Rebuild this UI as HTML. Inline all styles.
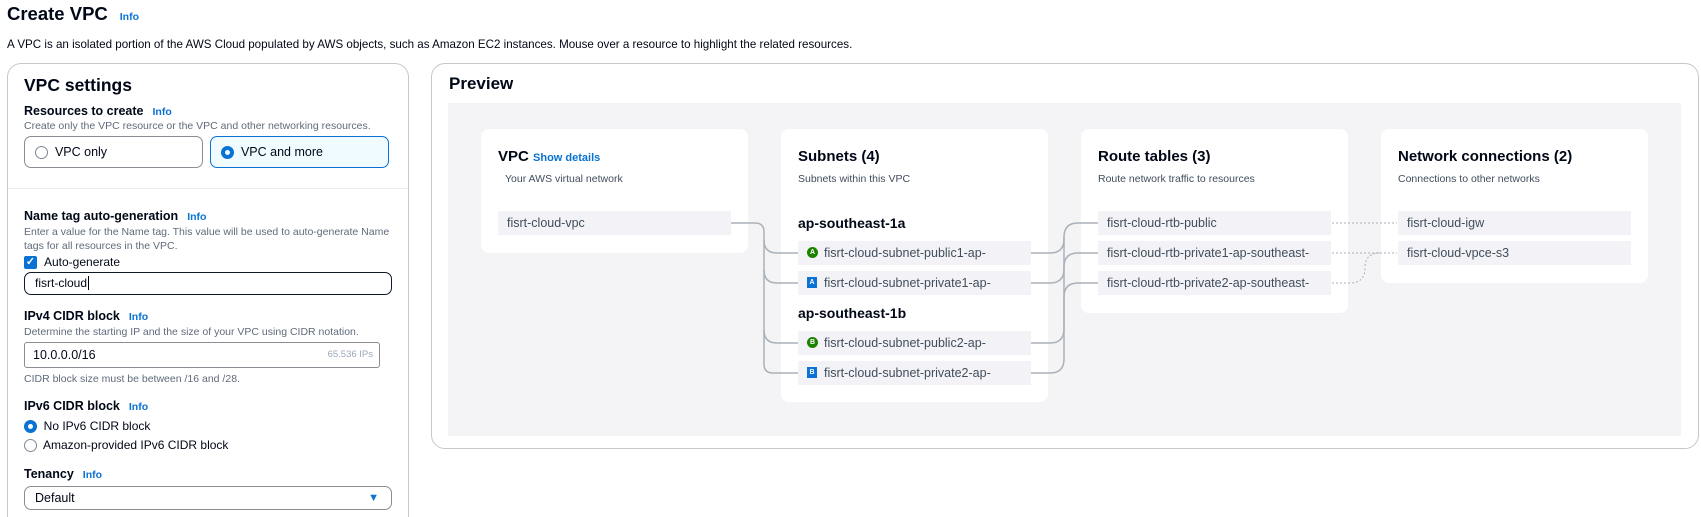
<!DOCTYPE html>
<html><head><meta charset="utf-8"><style>
*{box-sizing:border-box;margin:0;padding:0}
html,body{width:1701px;height:517px;overflow:hidden}
body{background:#fff;font-family:"Liberation Sans",sans-serif;color:#000716;position:relative}
.a{position:absolute;white-space:nowrap}
.info{color:#0972d3;font-weight:bold;font-size:10.5px;margin-left:9px}
.lbl{font-weight:bold;font-size:12.5px}
.sub{font-size:10.5px;color:#5f6b7a}
.card{position:absolute;background:#fff;border-radius:8px}
.row{position:absolute;background:#f3f3f7;height:24px;font-size:12.5px;color:#414d5c;line-height:24px;padding-left:9px;white-space:nowrap}
.ct{position:absolute;font-weight:bold;font-size:15px;left:17px;top:19px;white-space:nowrap}
.cs{position:absolute;font-size:10.5px;color:#414d5c;left:17px;top:44px;white-space:nowrap}
.box{position:absolute;border:1px solid #8c8c94;border-radius:7px}
.rad{display:inline-block;width:13px;height:13px;border-radius:50%;border:1.5px solid #7d8998;vertical-align:middle}
.radon{border:4px solid #0972d3}
</style></head><body>
<div class="a" style="left:7px;top:3px;font-size:18.5px;font-weight:bold">Create VPC<span class="info" style="margin-left:12px">Info</span></div>
<div class="a" style="left:7px;top:38px;font-size:11.6px">A VPC is an isolated portion of the AWS Cloud populated by AWS objects, such as Amazon EC2 instances. Mouse over a resource to highlight the related resources.</div>

<div style="position:absolute;left:7px;top:63px;width:402px;height:454px;border:1px solid #c6c6cd;border-bottom:none;border-radius:14px 14px 0 0"></div>
<div class="a" style="left:24px;top:75px;font-size:17.5px;font-weight:bold">VPC settings</div>
<div class="a lbl" style="left:24px;top:104px">Resources to create<span class="info">Info</span></div>
<div class="a sub" style="left:24px;top:120px">Create only the VPC resource or the VPC and other networking resources.</div>
<div class="box" style="left:24px;top:136px;width:179px;height:32px;line-height:30px;padding-left:10px;font-size:12.5px"><span class="rad"></span>&nbsp; VPC only</div>
<div class="box" style="left:210px;top:136px;width:179px;height:32px;line-height:30px;padding-left:10px;font-size:12.5px;background:#f0fbff;border-color:#0972d3"><span class="rad radon"></span>&nbsp; VPC and more</div>
<div style="position:absolute;left:8px;top:188px;width:400px;height:1px;background:#e9ebed"></div>
<div class="a lbl" style="left:24px;top:209px">Name tag auto-generation<span class="info">Info</span></div>
<div class="a sub" style="left:24px;top:225px;line-height:14px">Enter a value for the Name tag. This value will be used to auto-generate Name<br>tags for all resources in the VPC.</div>
<div class="a" style="left:24px;top:256px;width:13px;height:13px;background:#0972d3;border-radius:2px;color:#fff;font-size:11px;line-height:13px;text-align:center;font-weight:bold">✓</div>
<div class="a" style="left:44px;top:255px;font-size:12px">Auto-generate</div>
<div class="box" style="left:24px;top:272px;width:368px;height:23px;border:1.5px solid #0f1b2a;font-size:12px;line-height:20px;padding-left:10px">fisrt-cloud<span style="border-left:1px solid #000;margin-left:1px"></span></div>
<div class="a lbl" style="left:24px;top:309px">IPv4 CIDR block<span class="info">Info</span></div>
<div class="a sub" style="left:24px;top:326px">Determine the starting IP and the size of your VPC using CIDR notation.</div>
<div class="box" style="left:24px;top:342px;width:356px;height:26px;font-size:12.5px;line-height:24px;padding-left:8px;border-radius:3px">10.0.0.0/16<span style="position:absolute;right:6px;font-size:9.5px;color:#9ba7b6">65.536 IPs</span></div>
<div class="a sub" style="left:24px;top:373px">CIDR block size must be between /16 and /28.</div>
<div class="a lbl" style="left:24px;top:399px">IPv6 CIDR block<span class="info">Info</span></div>
<div class="a" style="left:24px;top:419px;font-size:12px"><span class="rad radon"></span>&nbsp; No IPv6 CIDR block</div>
<div class="a" style="left:24px;top:438px;font-size:12px"><span class="rad"></span>&nbsp; Amazon-provided IPv6 CIDR block</div>
<div class="a lbl" style="left:24px;top:467px">Tenancy<span class="info">Info</span></div>
<div class="box" style="left:24px;top:486px;width:368px;height:24px;font-size:12.5px;line-height:22px;padding-left:10px">Default<span style="position:absolute;right:12px;top:0;color:#0972d3;font-size:11px">▼</span></div>

<div style="position:absolute;left:431px;top:63px;width:1268px;height:386px;border:1px solid #c6c6cd;border-radius:14px"></div>
<div class="a" style="left:449px;top:74px;font-size:17px;font-weight:bold">Preview</div>
<div style="position:absolute;left:448px;top:103px;width:1233px;height:333px;background:#f4f4f6"></div>

<div class="card" style="left:481px;top:129px;width:267px;height:124px">
<div class="ct">VPC <span style="color:#0972d3;font-size:11px">Show details</span></div>
<div class="cs" style="left:24px">Your AWS virtual network</div>
<div class="row" style="left:17px;top:82px;width:233px">fisrt-cloud-vpc</div></div>

<div class="card" style="left:781px;top:129px;width:267px;height:273px">
<div class="ct">Subnets (4)</div><div class="cs">Subnets within this VPC</div>
<div class="a" style="left:17px;top:86px;font-weight:bold;font-size:14px">ap-southeast-1a</div>
<div class="row" style="left:17px;top:112px;width:233px;padding-left:26px"><span style="position:absolute;left:9px;top:6px;width:11px;height:11px;border-radius:50%;background:#1d8102;color:#fff;font-size:7px;line-height:11px;text-align:center;font-weight:bold">A</span>fisrt-cloud-subnet-public1-ap-</div>
<div class="row" style="left:17px;top:142px;width:233px;padding-left:26px"><span style="position:absolute;left:9px;top:6px;width:10px;height:11px;background:#0972d3;color:#fff;font-size:7px;line-height:11px;text-align:center;font-weight:bold">A</span>fisrt-cloud-subnet-private1-ap-</div>
<div class="a" style="left:17px;top:176px;font-weight:bold;font-size:14px">ap-southeast-1b</div>
<div class="row" style="left:17px;top:202px;width:233px;padding-left:26px"><span style="position:absolute;left:9px;top:6px;width:11px;height:11px;border-radius:50%;background:#1d8102;color:#fff;font-size:7px;line-height:11px;text-align:center;font-weight:bold">B</span>fisrt-cloud-subnet-public2-ap-</div>
<div class="row" style="left:17px;top:232px;width:233px;padding-left:26px"><span style="position:absolute;left:9px;top:6px;width:10px;height:11px;background:#0972d3;color:#fff;font-size:7px;line-height:11px;text-align:center;font-weight:bold">B</span>fisrt-cloud-subnet-private2-ap-</div></div>

<div class="card" style="left:1081px;top:129px;width:267px;height:184px">
<div class="ct">Route tables (3)</div><div class="cs">Route network traffic to resources</div>
<div class="row" style="left:17px;top:82px;width:233px">fisrt-cloud-rtb-public</div>
<div class="row" style="left:17px;top:112px;width:233px">fisrt-cloud-rtb-private1-ap-southeast-</div>
<div class="row" style="left:17px;top:142px;width:233px">fisrt-cloud-rtb-private2-ap-southeast-</div></div>

<div class="card" style="left:1381px;top:129px;width:267px;height:154px">
<div class="ct">Network connections (2)</div><div class="cs">Connections to other networks</div>
<div class="row" style="left:17px;top:82px;width:233px">fisrt-cloud-igw</div>
<div class="row" style="left:17px;top:112px;width:233px">fisrt-cloud-vpce-s3</div></div>

<svg style="position:absolute;left:0;top:0" width="1701" height="517" fill="none">
<g stroke="#aab1b8" stroke-width="1.5">
<path d="M731 223H755Q764 223 764 232V364Q764 373 773 373H798"/>
<path d="M764 240Q764 253 777 253H798M764 270Q764 283 777 283H798M764 330Q764 343 777 343H798"/>
<path d="M1031 253H1050Q1064 253 1064 239V237Q1064 223 1078 223H1098"/>
<path d="M1031 283H1050Q1064 283 1064 269V267Q1064 253 1078 253H1098"/>
<path d="M1031 343H1050Q1064 343 1064 329V237"/>
<path d="M1031 373H1050Q1064 373 1064 359V297Q1064 283 1078 283H1098"/>
</g>
<g stroke="#aab1b8" stroke-width="1" stroke-dasharray="2 2">
<path d="M1332 223H1397M1332 253H1397M1332 283H1350Q1365 283 1365 268Q1365 253 1380 253"/>
</g></svg>
</body></html>
